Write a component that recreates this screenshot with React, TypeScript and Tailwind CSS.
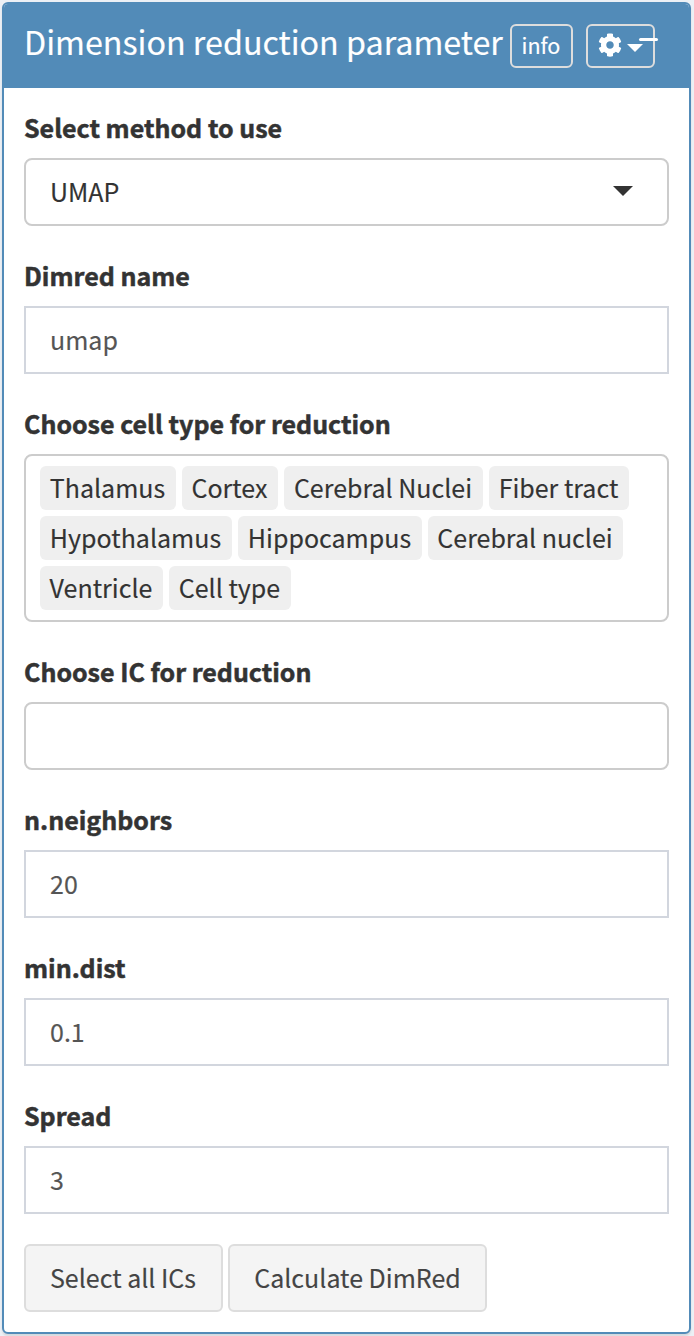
import type { ReactNode } from "react";
import { FaCog } from "react-icons/fa";

const tagRows = [
  [
    { name: "Thalamus", width: "w-[136px]" },
    { name: "Cortex", width: "w-[96px]" },
    { name: "Cerebral Nuclei", width: "w-[199px]" },
    { name: "Fiber tract", width: "w-[140px]" },
  ],
  [
    { name: "Hypothalamus", width: "w-[192px]" },
    { name: "Hippocampus", width: "w-[184px]" },
    { name: "Cerebral nuclei", width: "w-[195px]" },
  ],
  [
    { name: "Ventricle", width: "w-[123px]" },
    { name: "Cell type", width: "w-[122px]" },
  ],
];

function Field({ label, children }: { label: string; children: ReactNode }) {
  return (
    <div className="mb-[30px]">
      <div className="mb-2.5 h-10 text-[25px] leading-[38px] font-bold whitespace-nowrap [-webkit-text-stroke:0.5px_#333333]">
        {label}
      </div>
      {children}
    </div>
  );
}

function TextBox({ value }: { value: string }) {
  return (
    <div className="flex h-[68px] items-center border-2 border-[#d2d6de] px-6 pb-0.5 text-[#555555]">
      {value}
    </div>
  );
}

export default function App() {
  return (
    <div className="h-[1336px] w-[694px] bg-[#ecf0f5] pt-0.5 pl-0.5 font-['Noto_Sans_CJK_SC',sans-serif] text-[25px] leading-10 text-[#333333] [-webkit-text-stroke:0.15px]">
      <div className="h-[1332px] w-[689px] overflow-hidden rounded-md border-2 border-[#528bb8] bg-white shadow-[0_2px_2px_rgba(0,0,0,0.1)]">
        <header className="flex h-[84px] items-start bg-[#528bb8] pt-5 pl-5 text-white">
          <h1 className="w-[486px] text-[32.25px] leading-[34px] whitespace-nowrap">Dimension reduction parameter</h1>
          <button className="h-11 w-[63px] rounded-md border-2 border-[#dddddd] pr-px pb-0.5 text-[21.5px] leading-[38px]">
            info
          </button>
          <button className="relative ml-[13px] flex h-11 w-[69px] items-center rounded-md border-2 border-[#dddddd] pl-2.5">
            <FaCog className="-mt-0.5 size-6" />
            <svg className="mt-1 ml-[5px] h-2 w-4" viewBox="0 0 16 8" fill="currentColor">
              <path d="M0 0h16L8 8z" />
            </svg>
            <span className="absolute top-3 left-[51px] h-[3px] w-[19px] rounded-full bg-white" />
          </button>
        </header>
        <main className="px-5 pt-5">
          <Field label="Select method to use">
            <div className="flex h-[68px] items-center justify-between rounded-lg border-2 border-[#cccccc] pr-[34px] pb-0.5 pl-6">
              <span>UMAP</span>
              <svg className="h-2.5 w-5" viewBox="0 0 20 10" fill="currentColor">
                <path d="M0 0h20L10 10z" />
              </svg>
            </div>
          </Field>
          <Field label="Dimred name">
            <TextBox value="umap" />
          </Field>
          <Field label="Choose cell type for reduction">
            <div className="flex h-[168px] flex-col gap-1.5 rounded-lg border-2 border-[#cccccc] px-3.5 pt-2.5">
              {tagRows.map((row) => (
                <div className="flex gap-1.5" key={row[0].name}>
                  {row.map((tag) => (
                    <span
                      className={`${tag.width} h-11 rounded-md bg-[#efefef] pr-px text-center leading-[42px] whitespace-nowrap`}
                      key={tag.name}
                    >
                      {tag.name}
                    </span>
                  ))}
                </div>
              ))}
            </div>
          </Field>
          <Field label="Choose IC for reduction">
            <div className="h-[68px] rounded-lg border-2 border-[#cccccc]" />
          </Field>
          <Field label="n.neighbors">
            <TextBox value="20" />
          </Field>
          <Field label="min.dist">
            <TextBox value="0.1" />
          </Field>
          <Field label="Spread">
            <TextBox value="3" />
          </Field>
          <div className="flex gap-[5px] text-[#444444]">
            <button className="h-[68px] w-[199px] rounded-md border-2 border-[#dddddd] bg-[#f4f4f4] pr-px pb-0.5">
              Select all ICs
            </button>
            <button className="h-[68px] w-[259px] rounded-md border-2 border-[#dddddd] bg-[#f4f4f4] pb-0.5">
              Calculate DimRed
            </button>
          </div>
        </main>
      </div>
    </div>
  );
}
